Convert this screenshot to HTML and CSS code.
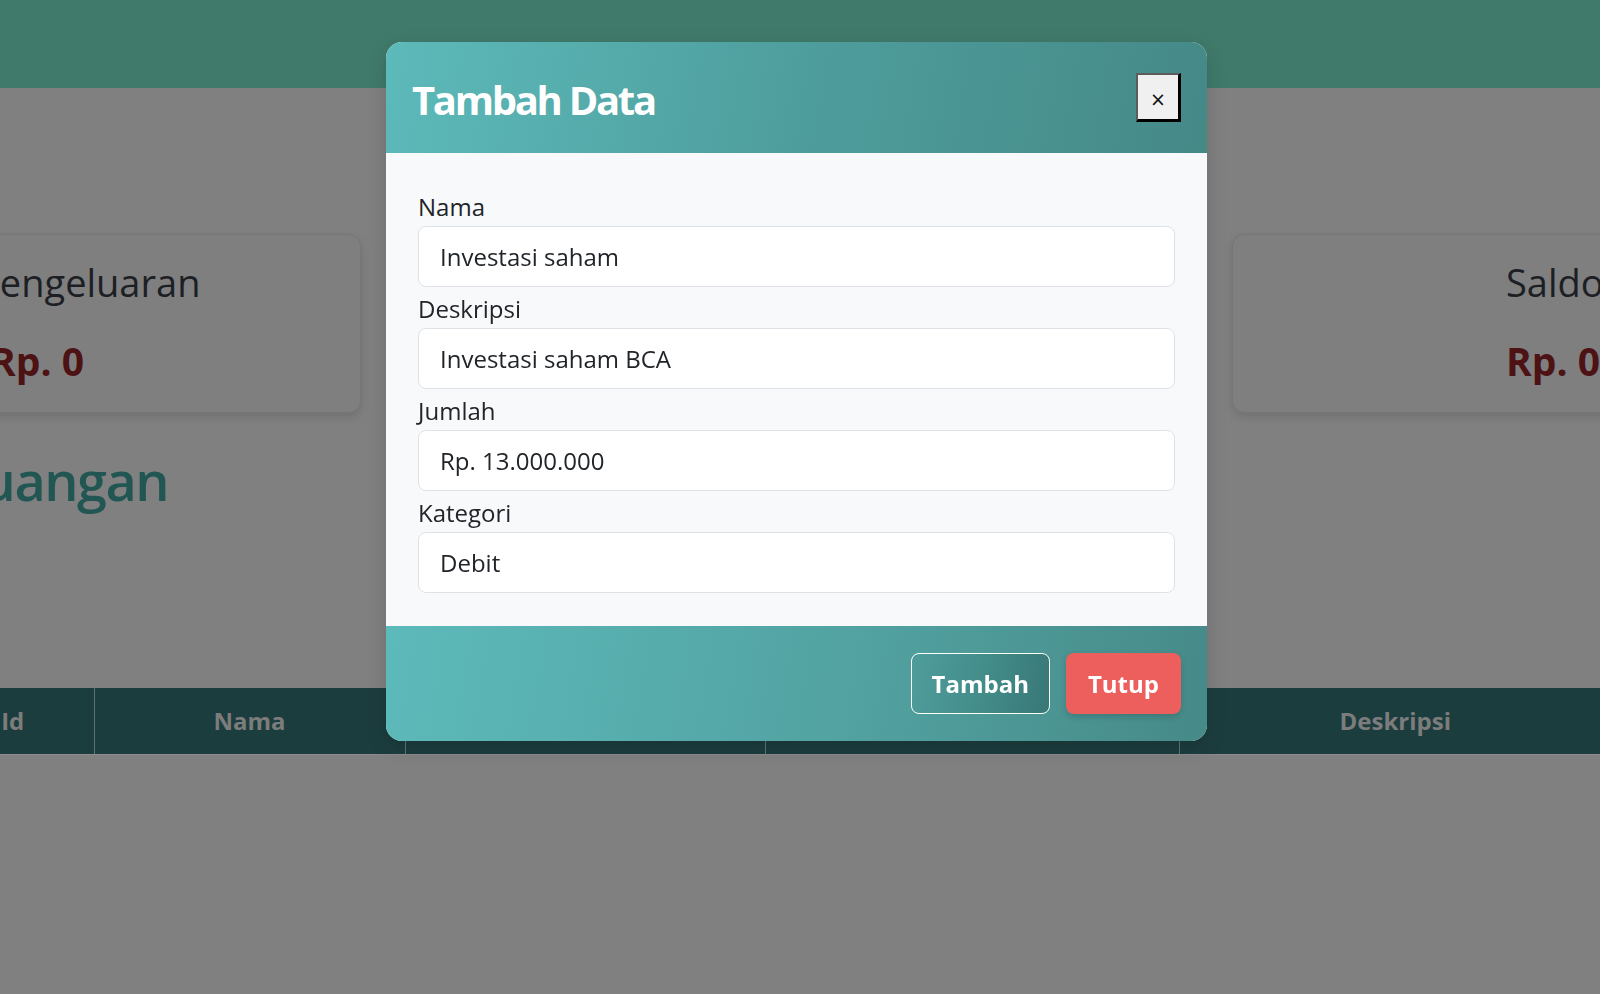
FILE: index.html
```html
<!DOCTYPE html>
<html lang="id">
<head>
<meta charset="utf-8">
<title>Keuangan - Tambah Data</title>
<link rel="stylesheet" href="styles.css">
</head>
<body>
  <header class="topbar"></header>

  <main class="page">
    <section class="summary">
      <div class="card card-out">
        <h3 class="card-label">Pengeluaran</h3>
        <p class="card-amount">Rp. 0</p>
      </div>
      <div class="card card-in">
        <h3 class="card-label">Pemasukan</h3>
        <p class="card-amount">Rp. 0</p>
      </div>
      <div class="card card-saldo">
        <h3 class="card-label">Saldo</h3>
        <p class="card-amount">Rp. 0</p>
      </div>
    </section>

    <h2 class="page-title">Keuangan</h2>

    <table class="data-table">
      <thead>
        <tr>
          <th class="col-id">Id</th>
          <th class="col-nama">Nama</th>
          <th class="col-jumlah">Jumlah</th>
          <th class="col-kategori">Kategori</th>
          <th class="col-desk">Deskripsi</th>
        </tr>
      </thead>
    </table>
  </main>

  <div class="modal">
    <div class="modal-header">
      <h1 class="modal-title">Tambah Data</h1>
      <button class="btn-close" type="button">×</button>
    </div>
    <form class="modal-body">
      <div class="field">
        <label class="field-label" for="nama">Nama</label>
        <input class="field-input" id="nama" type="text" value="Investasi saham">
      </div>
      <div class="field">
        <label class="field-label" for="deskripsi">Deskripsi</label>
        <input class="field-input" id="deskripsi" type="text" value="Investasi saham BCA">
      </div>
      <div class="field">
        <label class="field-label" for="jumlah">Jumlah</label>
        <input class="field-input" id="jumlah" type="text" value="Rp. 13.000.000">
      </div>
      <div class="field">
        <label class="field-label" for="kategori">Kategori</label>
        <input class="field-input" id="kategori" type="text" value="Debit">
      </div>
    </form>
    <div class="modal-footer">
      <button class="btn btn-add" type="button">Tambah</button>
      <button class="btn btn-close-modal" type="button">Tutup</button>
    </div>
  </div>
</body>
</html>
```

FILE: styles.css
```css
* { box-sizing: border-box; }

html, body {
  margin: 0;
  padding: 0;
}

body {
  width: 1600px;
  height: 994px;
  overflow: hidden;
  background: #808080;
  font-family: "Open Sans", "Noto Sans", sans-serif;
  color: #212529;
}

.topbar {
  height: 88px;
  background: #407a6b;
}

.page {
  display: flex;
  flex-direction: column;
}

.summary {
  display: flex;
  gap: 40px;
  margin-top: 146px;
  margin-left: -193px;
}

.card {
  height: 179px;
  border: 1px solid #767676;
  border-radius: 12px;
  background: #7f7f7f;
  box-shadow: 0 4px 10px rgba(0, 0, 0, 0.12);
  padding-top: 25px;
  flex: none;
}

.card-out { width: 554px; padding-left: 169px; }
.card-in { width: 791px; padding-left: 300px; }
.card-saldo { width: 554px; padding-left: 273px; }

.card-label {
  margin: 0;
  font-size: 38px;
  line-height: 44px;
  font-weight: 400;
  color: #1c2024;
}

.card-amount {
  margin: 34px 0 0;
  font-size: 39px;
  line-height: 46px;
  font-weight: 700;
  color: #4c1214;
}

.card-out .card-amount { margin-left: 13px; }

.page-title {
  margin: 36px 0 0 -81px;
  font-size: 54px;
  line-height: 62px;
  font-weight: 600;
  letter-spacing: -1.5px;
  color: #225653;
}

.data-table {
  margin: 177px 0 0 -68px;
  border-collapse: collapse;
  table-layout: fixed;
  width: 1679px;
}

.data-table th {
  height: 66px;
  background: #1c3d3e;
  color: #7c7c7c;
  font-size: 24px;
  font-weight: 700;
  text-align: center;
  border-left: 1px solid #5e7373;
  border-bottom: 1px solid #8c8c8c;
  padding: 0;
}

.data-table th:first-child { border-left: none; }

.col-id { width: 162px; }
.col-nama { width: 311px; }
.col-jumlah { width: 360px; }
.col-kategori { width: 414px; }
.col-desk { width: 432px; }

/* Modal */
.modal {
  position: fixed;
  top: 42px;
  left: 386px;
  width: 821px;
  border-radius: 16px;
  overflow: hidden;
  background: #f8f9fa;
  box-shadow: 0 6px 20px rgba(0, 0, 0, 0.15);
}

.modal-header {
  height: 111px;
  display: flex;
  align-items: center;
  justify-content: space-between;
  padding: 0 26px;
  background: linear-gradient(100deg, #5dbaba 0%, #4e9e9d 50%, #458987 100%);
}

.modal-title {
  margin: 0;
  font-size: 40px;
  line-height: 48px;
  font-weight: 700;
  letter-spacing: -2.3px;
  color: #ffffff;
  padding-top: 4px;
}

.btn-close {
  width: 45px;
  height: 49px;
  padding: 4px 0 0;
  background: #f0f0f0;
  border-style: solid;
  border-width: 2px 3px 3px 2px;
  border-color: #5c5c5c #000000 #000000 #5c5c5c;
  font-family: "DejaVu Sans", sans-serif;
  font-size: 19px;
  line-height: 1;
  color: #111;
}

.modal-body {
  margin: 0;
  padding: 32px 32px 33px;
  background: #f8f9fa;
}

.field {
  display: flex;
  flex-direction: column;
}

.field-label {
  margin-top: 3px;
  font-size: 24px;
  line-height: 38px;
  color: #212529;
}

.field-input {
  height: 61px;
  width: 100%;
  border: 1px solid #dee2e6;
  border-radius: 8px;
  background: #ffffff;
  padding: 0 21px;
  font-family: "Open Sans", "Noto Sans", sans-serif;
  font-size: 24px;
  color: #212529;
  outline: none;
}

.modal-footer {
  display: flex;
  justify-content: flex-end;
  gap: 16px;
  padding: 27px 26px;
  background: linear-gradient(100deg, #5dbaba 0%, #52a3a2 55%, #468a88 100%);
}

.btn {
  height: 61px;
  border-radius: 8px;
  font-family: "Open Sans", "Noto Sans", sans-serif;
  font-size: 24px;
  font-weight: 700;
  color: #ffffff;
  padding: 0 20px;
}

.btn-add {
  border: 1.5px solid #ffffff;
  background: linear-gradient(100deg, #4f9d9b 0%, #438d8b 50%, #387877 100%);
}

.btn-close-modal {
  border: none;
  padding: 0 22px;
  background: #ec5f5c;
  box-shadow: 0 3px 6px rgba(0, 0, 0, 0.15);
}
```
